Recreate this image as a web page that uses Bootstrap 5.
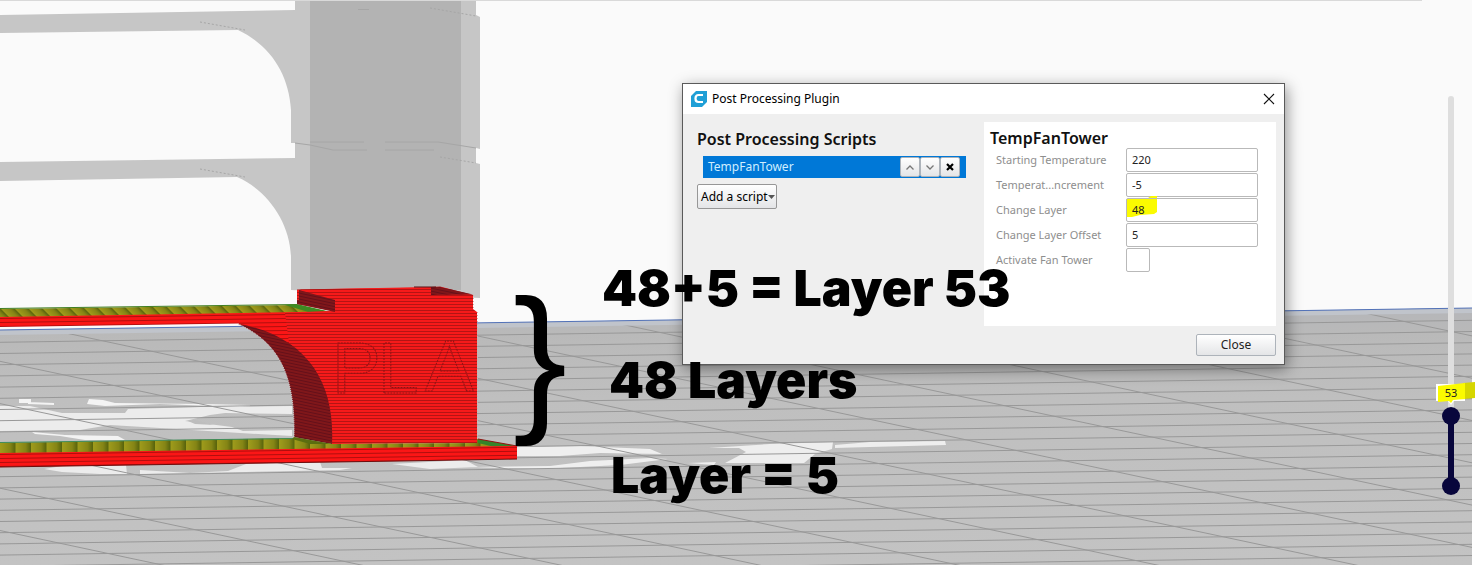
<!DOCTYPE html>
<html lang="en">
<head>
<meta charset="utf-8">
<meta name="viewport" content="width=device-width, initial-scale=1">
<title>Post Processing Plugin</title>
<link href="https://cdn.jsdelivr.net/npm/bootstrap@5.3.0/dist/css/bootstrap.min.css" rel="stylesheet">
<style>
  body { font-family: "Noto Sans", sans-serif; font-size: 12px; line-height: 16px; color: #1b1b1b; background: #fafafa; }
  .stage { min-height: 100vh; }
  .scene { inset: 0; }

  /* plugin window */
  .plugin-window { left: 682px; top: 83px; width: 603px; background: #efefef; border: 1px solid #5a5a5a; box-shadow: 2px 4px 14px rgba(0,0,0,.42); }
  .title-bar { height: 30px; background: #fff; color: #000; padding: 0 8px; gap: 5px; }
  .title-bar button { width: 14px; height: 14px; }
  .window-body { padding: 8px 8px 8px 14px; }
  .heading { font-size: 16px; line-height: 20px; font-weight: 600; color: #111; }
  .scripts-pane { width: 270px; padding-top: 7px; }
  .script-row { height: 22px; margin: 7px 0 6px 6px; padding: 0 6px 0 5px; width: 263px; background: #0078d7; color: #cfeeff; }
  .tool { border: 1px solid #adb3ba; border-radius: 2px; background: linear-gradient(#fff, #e4e5e7); color: #222; }
  .script-row .tool { width: 20px; height: 20px; }
  .add-script { width: 80px; height: 25px; padding: 0 3px; border-color: #979797; color: #000; }
  .settings-pane { width: 292px; height: 204px; padding: 7px 18px 0 6px; background: #fff; }
  .settings-pane .heading { line-height: 18px; }
  .setting { height: 25px; padding-left: 6px; font-size: 11px; }
  .setting label { color: #8e8e8e; }
  .field { width: 132px; height: 24px; }
  .field input { width: 100%; height: 100%; padding: 0 5px; border: 1px solid #b9b9b9; border-radius: 2px; background: transparent; color: #222; font-size: 11px; }
  .tick-field { width: 132px; height: 24px; }
  .tick-field input { width: 24px; height: 24px; margin: 0; appearance: none; border: 1px solid #b9b9b9; border-radius: 2px; background: #fff; }
  .close-btn { width: 80px; height: 22px; }

  /* notes drawn over the view */
  .note { font-family: Inter, "Liberation Sans", sans-serif; font-weight: 900; font-size: 50px; line-height: 56px; color: #000; }
  .note-sum { left: 602px; top: 260px; }
  .note-span { left: 609px; top: 352px; }
  .note-base { left: 611px; top: 447px; }
  .brace { font-family: "Liberation Sans", sans-serif; font-size: 162px; line-height: 162px; left: 513px; top: 275px; color: #000; }

  /* layer slider */
  .layer-slider { right: 15px; top: 96px; width: 18px; height: 399px; }
  .rail { left: 6px; top: 0; width: 6px; height: 390px; border-radius: 3px; background: #dedede; }
  .rail-fill { left: 6px; bottom: 9px; width: 6px; height: 70px; background: #08063c; }
  .layer-slider input { left: 0; top: 399px; width: 399px; height: 18px; margin: 0; appearance: none; background: transparent; transform: rotate(-90deg); transform-origin: 0 0; pointer-events: none; }
  .layer-slider input::-webkit-slider-thumb { appearance: none; width: 18px; height: 18px; border-radius: 50%; background: #08063c; pointer-events: auto; }
  .layer-tag { right: 0; top: 382px; width: 39px; height: 26px; }
  .layer-tag output { left: 0; top: 3px; width: 30px; font-size: 11px; color: #222; }
</style>
</head>
<body>
<main class="stage position-relative overflow-hidden">

<svg class="scene position-absolute w-100 h-100" viewBox="0 0 1475 565" preserveAspectRatio="xMidYMid slice" aria-hidden="true">
  <defs>
    <linearGradient id="floor" x1="0" y1="308" x2="0" y2="565" gradientUnits="userSpaceOnUse">
      <stop offset="0" stop-color="#b5b6b9"/><stop offset=".1" stop-color="#b9b9b9"/><stop offset=".35" stop-color="#bfbfbf"/><stop offset="1" stop-color="#c3c3c3"/>
    </linearGradient>
    <clipPath id="floorClip"><path d="M0 335 1472 313V565H0Z"/></clipPath>
    <pattern id="red" width="75" height="3" patternUnits="userSpaceOnUse">
      <rect width="75" height="3" fill="#f61a1a"/><rect y="1" width="75" height="1" fill="#b41414"/>
    </pattern>
    <pattern id="beam" width="60" height="4" patternUnits="userSpaceOnUse" patternTransform="skewY(-0.8)">
      <rect width="60" height="4" fill="#fb1616"/><rect y="2" width="60" height="1" fill="#b00e0e"/>
    </pattern>
    <pattern id="dark" width="3" height="3" patternUnits="userSpaceOnUse" patternTransform="skewY(12)">
      <rect width="3" height="3" fill="#80171a"/><rect y="1" width="3" height="1" fill="#64101a"/>
    </pattern>
    <linearGradient id="oliveShade"><stop offset="0" stop-color="#a09c1c"/><stop offset=".65" stop-color="#858515"/><stop offset="1" stop-color="#56620c"/></linearGradient>
    <pattern id="olive" width="15.5" height="20" patternUnits="userSpaceOnUse"><rect width="15.5" height="20" fill="url(#oliveShade)"/></pattern>
    <pattern id="oliveSlant" width="14" height="20" patternUnits="userSpaceOnUse" patternTransform="skewX(45)"><rect width="14" height="20" fill="url(#oliveShade)"/></pattern>
  </defs>
  <rect width="1475" height="565" fill="#fff"/>
  <rect width="1472" height="565" fill="#fafafa"/>
  <path d="M0 .5H1422" stroke="#d9d9d9"/>

  <!-- build plate -->
  <path d="M0 330 1472 308V565H0Z" fill="url(#floor)"/>
  <path d="M0 330 1472 308V313L0 335Z" fill="#c0c4cb"/>
  <path d="M0 330 1472 308" stroke="#5272b8" fill="none"/>

  <!-- bright patches on the plate -->
  <g fill="#ececec">
    <path d="M0 406 30 406 62 413 125 413 128 409 200 407 292 406V414L225 413 210 415 185 421 232 427 243 431 292 430V436L240 433 160 428 110 425 80 430 0 431Z"/>
    <path d="M19 399h12v4h-12zM89 399l14 1 12 3 90 1 45 1v1l-10 1-80-3-55 2-18-2zM28 402l26 1v2l-26-1z" fill="#f3f3f3"/>
    <path d="M188 421 195 420 214 425 195 424Z" fill="#bdbdbd"/>
    <path d="M32 432 65 435 118 436 125 440H85L60 436 35 434Z" fill="#f3f3f3"/>
    <path d="M44 469 62 466 126 465 127 474 100 474 62 472ZM140 470 190 473 228 471 246 464 320 462 322 468 352 468 340 470 245 472 140 474ZM392 464 465 460 478 467 430 469Z"/>
    <path d="M517 447 580 446 650 449 662 454 600 453 560 456 517 456ZM470 467 550 466 590 461 650 458 668 459 620 465 540 469Z" fill="#efefef"/>
    <path d="M709 448 770 444 833 442 832 449 815 454 804 463H725L746 452 739 448ZM835 445 870 442 945 441 946 445 870 447 835 448ZM688 463 716 462 714 465Z" fill="#eee"/>
  </g>
  <g id="grid" clip-path="url(#floorClip)" fill="none" stroke="#989898"></g>

  <!-- unsliced part of the tower -->
  <path d="M295 1H476V15L480 17V149L476 148V163L480 164V298L291 290V257C290 222 267 190 237 177L0 181V162L295 158V143H291V110C289 74 270 45 238 30L0 33V15L295 10Z" fill="#c6c6c6"/>
  <path d="M310 1H461V290H310Z" fill="#b3b3b3"/>
  <g fill="none" stroke="#a6a6a6">
    <path d="M295 143 310 145 333 150H367M310 142H364M385 142H438L476 148M385 150H434M358 9.500H369"/>
    <path d="M200 22 245 30M200 169 245 177M430 8 476 16M440 157 476 163" stroke-dasharray="2 2"/>
  </g>

  <!-- upper arm -->
  <path d="M0 309 297 305 330 312 300 315 0 318Z" fill="url(#oliveSlant)"/>
  <path d="M0 308.500 297 304.500" stroke="#3f7d20"/>
  <path d="M285 305 297 304 331 312 312 313Z" fill="#3d8a22"/>
  <path d="M0 317 300 312 340 311 340 360 300 352 238 323.500 0 327Z" fill="url(#beam)"/>

  <!-- column -->
  <path d="M297 289.500 432 287 440 286.500 473 295V309L477 312V443L332 444 290 350 285 313 334 311 297 304Z" fill="url(#red)"/>
  <path d="M299 290 335 300V312L297 304V300H299Z" fill="url(#dark)"/>
  <path d="M431 287 440 287 473 294.500 431 295Z" fill="url(#dark)"/>
  <path d="M299 289.500 431 287.500 431 295 335 298Z" fill="url(#red)"/>
  <path d="M414 287H436" stroke="#5b0d10"/>
  <path d="M238 324C285 345 295 385 294 437L332 444C335 385 310 340 245 325Z" fill="url(#dark)"/>
  <path d="M238 324C285 345 295 385 294 437" fill="none" stroke="#d8d8d8" stroke-dasharray="1 1"/>
  <path d="M477.500 312V443M473.500 295V310" stroke="#d9a8a8" stroke-dasharray="1 2"/>
  <g font-family="Liberation Sans, sans-serif" font-size="73" fill="none" stroke="#8f1214" stroke-dasharray="2 1">
    <text x="332" y="393">P</text><text x="378" y="393">L</text><text x="425" y="391">A</text>
  </g>

  <!-- base plate of the tower -->
  <path d="M0 443 294 438 332 444 477 443V439L517 446 300 452 0 455Z" fill="url(#olive)"/>
  <path d="M0 442.500 294 438.500" stroke="#3f8d5a"/>
  <path d="M478 439 515 446 495 447 478 443Z" fill="#34842a"/>
  <path d="M478 439 517 446" stroke="#8e1414"/>
  <path d="M294 437 332 444 310 444 292 439Z" fill="#5b6d10"/>
  <path d="M0 453 517 446V459L400 461 0 467Z" fill="url(#beam)"/>
  <path d="M0 467 400 461 517 459" fill="none" stroke="#6e0c0c"/>
</svg>

<section class="plugin-window position-absolute" role="dialog" aria-labelledby="window-title">
  <header class="title-bar d-flex align-items-center">
    <svg width="16" height="16" viewBox="0 0 16 16" aria-hidden="true"><path d="M5 0H16V11L11 16H0V5Z" fill="#1f9fd6"/><path d="M12 4H7.500Q4.500 4 4.500 7.500T7.500 11H12" fill="none" stroke="#fff" stroke-width="2.200"/></svg>
    <span id="window-title">Post Processing Plugin</span>
    <button type="button" class="btn p-0 border-0 ms-auto d-flex align-items-center justify-content-center" aria-label="Close window"><svg width="12" height="12" viewBox="0 0 12 12"><path d="M1 1 11 11M11 1 1 11" stroke="#111" stroke-width="1.100"/></svg></button>
  </header>
  <div class="window-body">
    <div class="d-flex justify-content-between">
      <div class="scripts-pane">
        <h1 class="heading m-0">Post Processing Scripts</h1>
        <div class="script-row d-flex align-items-center">
          <span class="me-auto">TempFanTower</span>
          <button type="button" class="tool p-0 d-flex align-items-center justify-content-center" aria-label="Move up"><svg width="8" height="5" viewBox="0 0 8 5"><path d="M.5 4.500 4 1 7.500 4.500" fill="none" stroke="#777" stroke-width="1.300"/></svg></button>
          <button type="button" class="tool p-0 d-flex align-items-center justify-content-center" aria-label="Move down"><svg width="8" height="5" viewBox="0 0 8 5"><path d="M.5 .5 4 4 7.500 .5" fill="none" stroke="#777" stroke-width="1.300"/></svg></button>
          <button type="button" class="tool p-0 d-flex align-items-center justify-content-center" aria-label="Remove"><svg width="8" height="8" viewBox="0 0 8 8"><path d="M1 1 7 7M7 1 1 7" stroke="#000" stroke-width="2.200"/></svg></button>
        </div>
        <button type="button" class="tool add-script d-flex align-items-center text-nowrap"><span>Add a script</span><svg class="flex-shrink-0" width="7" height="4" viewBox="0 0 7 4" aria-hidden="true"><path d="M0 0H7L3.500 4Z" fill="#555"/></svg></button>
      </div>
      <div class="settings-pane">
        <h2 class="heading m-0">TempFanTower</h2>
        <div class="setting d-flex justify-content-between align-items-center"><label for="start">Starting Temperature</label><div class="field"><input id="start" type="text" value="220"></div></div>
        <div class="setting d-flex justify-content-between align-items-center"><label for="step">Temperat...ncrement</label><div class="field"><input id="step" type="text" value="-5"></div></div>
        <div class="setting d-flex justify-content-between align-items-center"><label for="layer">Change Layer</label><div class="field position-relative">
          <svg class="position-absolute top-0 start-0 overflow-visible" width="32" height="24" viewBox="0 0 32 24" aria-hidden="true"><path d="M0 1 22 0 25-2 31-2 31 14 28 16 14 17 6 19 0 19Z" fill="#fbfb00"/></svg>
          <input class="position-relative" id="layer" type="text" value="48"></div></div>
        <div class="setting d-flex justify-content-between align-items-center"><label for="offset">Change Layer Offset</label><div class="field"><input id="offset" type="text" value="5"></div></div>
        <div class="setting d-flex justify-content-between align-items-center"><label for="fan">Activate Fan Tower</label><div class="tick-field d-flex"><input id="fan" type="checkbox"></div></div>
      </div>
    </div>
    <div class="d-flex justify-content-end pt-2"><button type="button" class="tool close-btn p-0">Close</button></div>
  </div>
</section>

<div class="brace position-absolute">}</div>
<div class="note note-sum position-absolute text-nowrap">48+5 = Layer 53</div>
<div class="note note-span position-absolute text-nowrap">48 Layers</div>
<div class="note note-base position-absolute text-nowrap">Layer = 5</div>

<div class="layer-slider position-absolute">
  <div class="rail position-absolute"></div>
  <div class="rail-fill position-absolute"></div>
  <input class="position-absolute" type="range" min="1" max="284" value="1" aria-label="Lowest layer">
  <input class="position-absolute" id="top-layer" type="range" min="1" max="284" value="53" aria-label="Highest layer">
</div>
<div class="layer-tag position-absolute">
  <svg width="39" height="26" viewBox="0 0 39 26" aria-hidden="true"><path d="M0 2H29V19H18L15 23 12 19H0Z" fill="#fff"/><path d="M27 1 39 0V16L28 17Z" fill="#d6d600"/><path d="M2 4 29 1V17L17 18 15 21 13 19 2 20Z" fill="#fbfb00"/></svg>
  <output class="position-absolute text-center" for="top-layer">53</output>
</div>
</main>

<script src="https://cdn.jsdelivr.net/npm/bootstrap@5.3.0/dist/js/bootstrap.bundle.min.js"></script>
<script>
  // Build-plate grid: two families of evenly spaced lines
  let d = '';
  for (let k = 0; k < 24; k++) { const y = 342.3 + 11.2 * k; d += `M0 ${y}L1472 ${y - 22}`; }
  for (let k = -8; k < 6; k++) { const y = 319 + 42.3 * k; d += `M0 ${y}L1472 ${y + 313}`; }
  const line = document.createElementNS('http://www.w3.org/2000/svg', 'path');
  line.setAttribute('d', d);
  document.getElementById('grid').append(line);
</script>
</body>
</html>
